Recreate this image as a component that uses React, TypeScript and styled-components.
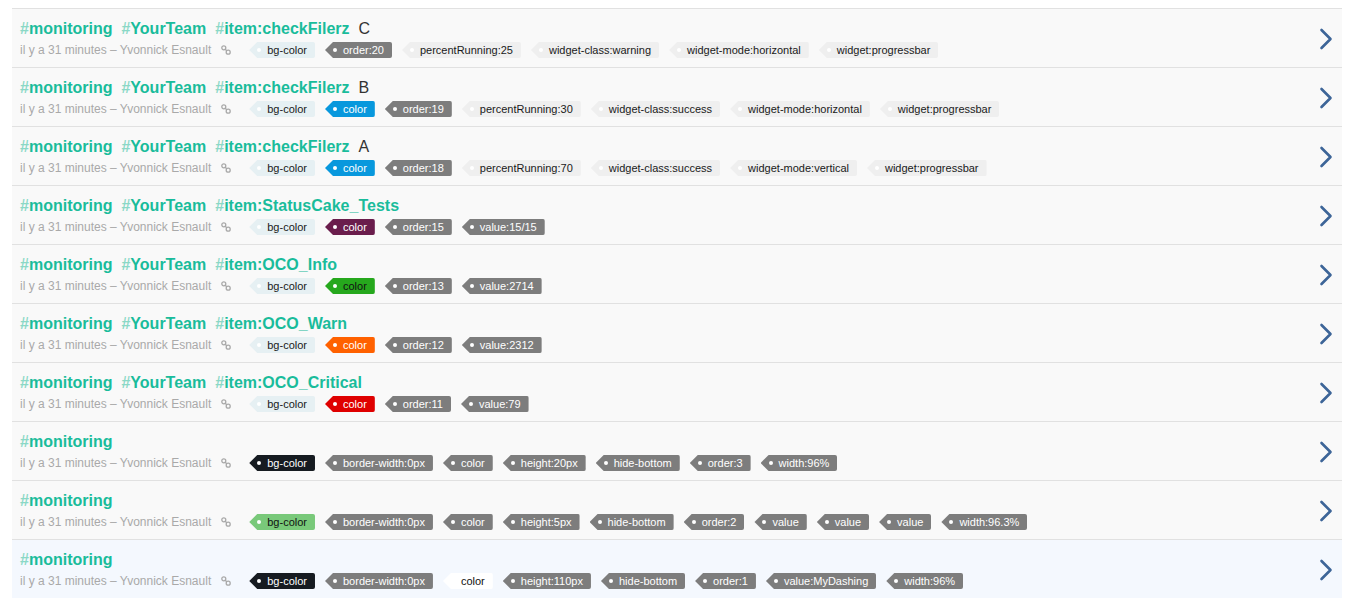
import React from "react";
import styled, { createGlobalStyle } from "styled-components";

const GlobalStyle = createGlobalStyle`
  html, body { margin: 0; padding: 0; background: #ffffff; }
  body { font-family: "Liberation Sans", Arial, Helvetica, sans-serif; }
`;

type TagKind =
  | "light"
  | "pale"
  | "gray"
  | "blue"
  | "purple"
  | "green"
  | "orange"
  | "red"
  | "dark"
  | "lime"
  | "white";

const tagColors: Record<TagKind, { bg: string; fg: string; dot: string }> = {
  light: { bg: "#efefef", fg: "#1a1a1a", dot: "#ffffff" },
  pale: { bg: "#e6f0f3", fg: "#1a1a1a", dot: "#ffffff" },
  gray: { bg: "#7d7d7d", fg: "#ffffff", dot: "#ffffff" },
  blue: { bg: "#0898dd", fg: "#ffffff", dot: "#ffffff" },
  purple: { bg: "#6a1d4c", fg: "#ffffff", dot: "#ffffff" },
  green: { bg: "#26a81d", fg: "#111111", dot: "#ffffff" },
  orange: { bg: "#ff6100", fg: "#ffffff", dot: "#ffffff" },
  red: { bg: "#df0000", fg: "#ffffff", dot: "#ffffff" },
  dark: { bg: "#161b21", fg: "#ffffff", dot: "#ffffff" },
  lime: { bg: "#79c97a", fg: "#111111", dot: "#ffffff" },
  white: { bg: "#ffffff", fg: "#111111", dot: "#ffffff" },
};

const Page = styled.div`
  padding: 8px 8px 12px 12px;
`;

const List = styled.div`
  display: flex;
  flex-direction: column;
`;

const Row = styled.div<{ $active?: boolean }>`
  display: flex;
  align-items: center;
  border-top: 1px solid #e1e1e1;
  background: ${(p) => (p.$active ? "#f4f8fe" : "#f9f9f9")};
  padding: 10px 9px 9px 8px;
`;

const Body = styled.div`
  flex: 1;
  display: flex;
  flex-direction: column;
  gap: 4px;
  min-width: 0;
`;

const Title = styled.div`
  display: flex;
  align-items: baseline;
  gap: 9px;
  height: 19px;
  line-height: 19px;
  font-size: 16px;
`;

const Hashtag = styled.span`
  font-weight: bold;
  color: #19bc9b;
`;

const Hash = styled.span`
  color: #8ad8c6;
`;

const Suffix = styled.span`
  color: #333333;
  font-weight: normal;
`;

const Meta = styled.div`
  display: flex;
  align-items: center;
  height: 16px;
`;

const MetaText = styled.span`
  font-size: 12px;
  line-height: 16px;
  color: #a9a9a9;
`;

const LinkIcon = styled.svg`
  margin-left: 10px;
  margin-right: 18px;
  flex: none;
`;

const Tags = styled.div`
  display: flex;
  align-items: center;
  gap: 10px;
`;

const Tag = styled.span<{ $kind: TagKind }>`
  display: inline-flex;
  align-items: center;
  height: 16px;
  padding-right: 8px;
  font-size: 11px;
  line-height: 16px;
  white-space: nowrap;
  background: ${(p) => tagColors[p.$kind].bg};
  color: ${(p) => tagColors[p.$kind].fg};
  border-radius: 0 2px 2px 0;
  clip-path: polygon(8px 0, 100% 0, 100% 100%, 8px 100%, 0 50%);
`;

const Dot = styled.span<{ $kind: TagKind }>`
  width: 4px;
  height: 4px;
  border-radius: 50%;
  margin-left: 8px;
  margin-right: 6px;
  background: ${(p) => tagColors[p.$kind].dot};
  flex: none;
`;

const Chevron = styled.svg`
  flex: none;
  margin-left: 12px;
`;

type RowData = {
  words: string[];
  suffix?: string;
  tags: [string, TagKind][];
  active?: boolean;
};

const rows: RowData[] = [
  {
    words: ["monitoring", "YourTeam", "item:checkFilerz"],
    suffix: "C",
    tags: [
      ["bg-color", "pale"],
      ["order:20", "gray"],
      ["percentRunning:25", "light"],
      ["widget-class:warning", "light"],
      ["widget-mode:horizontal", "light"],
      ["widget:progressbar", "light"],
    ],
  },
  {
    words: ["monitoring", "YourTeam", "item:checkFilerz"],
    suffix: "B",
    tags: [
      ["bg-color", "pale"],
      ["color", "blue"],
      ["order:19", "gray"],
      ["percentRunning:30", "light"],
      ["widget-class:success", "light"],
      ["widget-mode:horizontal", "light"],
      ["widget:progressbar", "light"],
    ],
  },
  {
    words: ["monitoring", "YourTeam", "item:checkFilerz"],
    suffix: "A",
    tags: [
      ["bg-color", "pale"],
      ["color", "blue"],
      ["order:18", "gray"],
      ["percentRunning:70", "light"],
      ["widget-class:success", "light"],
      ["widget-mode:vertical", "light"],
      ["widget:progressbar", "light"],
    ],
  },
  {
    words: ["monitoring", "YourTeam", "item:StatusCake_Tests"],
    tags: [
      ["bg-color", "pale"],
      ["color", "purple"],
      ["order:15", "gray"],
      ["value:15/15", "gray"],
    ],
  },
  {
    words: ["monitoring", "YourTeam", "item:OCO_Info"],
    tags: [
      ["bg-color", "pale"],
      ["color", "green"],
      ["order:13", "gray"],
      ["value:2714", "gray"],
    ],
  },
  {
    words: ["monitoring", "YourTeam", "item:OCO_Warn"],
    tags: [
      ["bg-color", "pale"],
      ["color", "orange"],
      ["order:12", "gray"],
      ["value:2312", "gray"],
    ],
  },
  {
    words: ["monitoring", "YourTeam", "item:OCO_Critical"],
    tags: [
      ["bg-color", "pale"],
      ["color", "red"],
      ["order:11", "gray"],
      ["value:79", "gray"],
    ],
  },
  {
    words: ["monitoring"],
    tags: [
      ["bg-color", "dark"],
      ["border-width:0px", "gray"],
      ["color", "gray"],
      ["height:20px", "gray"],
      ["hide-bottom", "gray"],
      ["order:3", "gray"],
      ["width:96%", "gray"],
    ],
  },
  {
    words: ["monitoring"],
    tags: [
      ["bg-color", "lime"],
      ["border-width:0px", "gray"],
      ["color", "gray"],
      ["height:5px", "gray"],
      ["hide-bottom", "gray"],
      ["order:2", "gray"],
      ["value", "gray"],
      ["value", "gray"],
      ["value", "gray"],
      ["width:96.3%", "gray"],
    ],
  },
  {
    words: ["monitoring"],
    active: true,
    tags: [
      ["bg-color", "dark"],
      ["border-width:0px", "gray"],
      ["color", "white"],
      ["height:110px", "gray"],
      ["hide-bottom", "gray"],
      ["order:1", "gray"],
      ["value:MyDashing", "gray"],
      ["width:96%", "gray"],
    ],
  },
];

const Link = () => (
  <LinkIcon width="10" height="10" viewBox="0 0 10 10" fill="none">
    <circle cx="2.8" cy="2.8" r="2" stroke="#a9a9a9" strokeWidth="1.3" />
    <circle cx="7.2" cy="7.2" r="2" stroke="#a9a9a9" strokeWidth="1.3" />
    <line x1="4.2" y1="4.2" x2="5.8" y2="5.8" stroke="#a9a9a9" strokeWidth="1.3" />
  </LinkIcon>
);

const Arrow = () => (
  <Chevron width="14" height="22" viewBox="0 0 14 22" fill="none">
    <polyline
      points="2.5,2 11.5,11 2.5,20"
      stroke="#3d6598"
      strokeWidth="2.6"
      strokeLinecap="round"
      strokeLinejoin="round"
    />
  </Chevron>
);

export default function App() {
  return (
    <Page>
      <GlobalStyle />
      <List>
        {rows.map((r, i) => (
          <Row key={i} $active={r.active}>
            <Body>
              <Title>
                {r.words.map((w) => (
                  <Hashtag key={w}>
                    <Hash>#</Hash>
                    {w}
                  </Hashtag>
                ))}
                {r.suffix && <Suffix>{r.suffix}</Suffix>}
              </Title>
              <Meta>
                <MetaText>il y a 31 minutes – Yvonnick Esnault</MetaText>
                <Link />
                <Tags>
                  {r.tags.map(([label, kind], j) => (
                    <Tag key={j} $kind={kind}>
                      <Dot $kind={kind} />
                      {label}
                    </Tag>
                  ))}
                </Tags>
              </Meta>
            </Body>
            <Arrow />
          </Row>
        ))}
      </List>
    </Page>
  );
}
